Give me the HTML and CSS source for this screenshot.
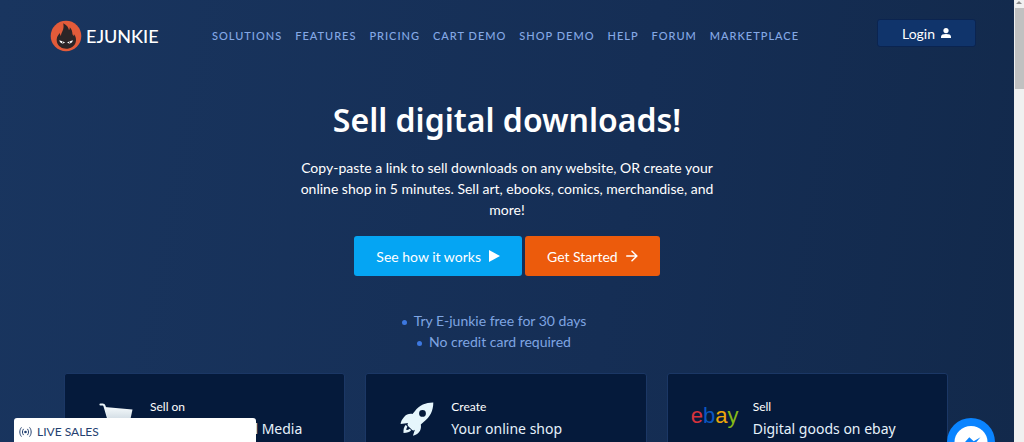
FILE: index.html
```html
<!DOCTYPE html>
<html lang="en">
<head>
  <meta charset="UTF-8" />
  <meta name="viewport" content="width=device-width, initial-scale=1.0" />
  <title>E-junkie - Sell digital downloads</title>
  <link rel="stylesheet" href="styles.css">
</head>
<body>
  <div class="page">
    <header class="topbar">
      <a href="#" class="logo">
        <svg width="32" height="32" viewBox="0 0 32 32" aria-hidden="true">
          <circle cx="16" cy="16" r="15.3" fill="#e25b3a" />
          <path fill="#2b2527" d="M13.2 3.200c3.600 1.600 5.300 4.400 5.800 7 .7-1 .9-2 .8-3 2.200 2.500 2.400 4.300 2.600 6.300 0 1.300.8 2 1.300 2.600.3-.8.3-1.500.1-2.200 2.200 2.600 2.700 5.600 1.900 8.300-1.100 3.900-5 6.500-9.500 6.500S7.900 26 6.900 22c-.9-3.400.6-6.500 3-8.900.1 1.300.4 2.200 1 2.900.2-2.700 1.600-4.300 2.200-6.400.6-2.200.6-4.300.1-6.400z" />
          <path fill="#fff" d="M9.300 20.200l5.600 2.100c-.7 1.800-4.800 1.700-5.600-2.100zM22.900 20.200l-5.600 2.100c.7 1.800 4.800 1.700 5.600-2.100z" />
          <circle cx="12.600" cy="22.200" r=".6" fill="#2b2527" />
          <circle cx="19.600" cy="22.200" r=".6" fill="#2b2527" />
        </svg>
        <span>EJUNKIE</span>
      </a>
      <nav class="menu">
        <a href="#">SOLUTIONS</a>
        <a href="#">FEATURES</a>
        <a href="#">PRICING</a>
        <a href="#">CART DEMO</a>
        <a href="#">SHOP DEMO</a>
        <a href="#">HELP</a>
        <a href="#">FORUM</a>
        <a href="#">MARKETPLACE</a>
      </nav>
      <a href="#" class="login">
        Login
        <svg width="10" height="10" viewBox="0 0 10 10" aria-hidden="true">
          <circle cx="5" cy="2.600" r="2.600" fill="#fff" />
          <path d="M0 10V8.600C0 6.900 2.200 6.100 5 6.100s5 .8 5 2.500V10z" fill="#fff" />
        </svg>
      </a>
    </header>

    <main>
      <section class="hero">
        <h1>Sell digital downloads!</h1>
        <p>Copy-paste a link to sell downloads on any website, OR create your online shop in 5 minutes. Sell art, ebooks, comics, merchandise, and more!</p>
        <div class="buttons">
          <button type="button" class="btn btn-blue">
            See how it works
            <svg width="11" height="12" viewBox="0 0 11 12" aria-hidden="true"><path d="M0 0l11 6-11 6z" fill="#fff" /></svg>
          </button>
          <button type="button" class="btn btn-orange">
            Get Started
            <svg width="12" height="12" viewBox="0 0 12 12" aria-hidden="true"><path d="M.7 6h10M6 1.200L10.900 6 6 10.800" fill="none" stroke="#fff" stroke-width="1.500" stroke-linecap="round" stroke-linejoin="round" /></svg>
          </button>
        </div>
        <ul class="perks">
          <li>Try E-junkie free for 30 days</li>
          <li>No credit card required</li>
        </ul>
      </section>

      <section class="cards">
        <a href="#" class="card">
          <div class="card-icon">
            <svg width="34" height="34" viewBox="0 0 34 34" aria-hidden="true">
              <defs>
                <linearGradient id="cart" x1="0" y1="0" x2="0" y2="1">
                  <stop offset="0" stop-color="#f4f9fb" />
                  <stop offset="1" stop-color="#c3d0da" />
                </linearGradient>
              </defs>
              <path d="M1.500 2.500h2.200c1 0 1.500.6 1.800 1.500l6.500 22h18" fill="none" stroke="#eaf4f8" stroke-width="2.200" stroke-linecap="round" />
              <path d="M5.500 5l28 2.500-3 14-20 1z" fill="url(#cart)" />
              <circle cx="14" cy="30" r="2.500" fill="#eaf4f8" />
              <circle cx="27" cy="30" r="2.500" fill="#eaf4f8" />
            </svg>
          </div>
          <div class="card-text">
            <small>Sell on</small>
            <h2>Website &amp; Social Media</h2>
          </div>
        </a>
        <a href="#" class="card">
          <div class="card-icon">
            <svg width="34" height="34" viewBox="0 0 34 34" aria-hidden="true">
              <path fill="#e6f6fc" fill-rule="evenodd" d="M33.300.6C26 .5 19.500 3.200 14.800 9.200L12.500 12c-3.300-.5-6.200.4-8.600 3.200C1.900 17.400.9 19.600.6 22l7.600-.9c-1 1.100-.9 2 .1 3.100l3.600 3.500c1 .9 2 .9 3 .1l-2 5.900c3.200-.7 5.700-2.400 7.100-5 1-2 1.200-4.200.8-6.300l2.800-2.400C30.200 15.400 33.300 8.500 33.300.6zM22.500 8a3.400 3.400 0 1 1 0 6.800 3.400 3.400 0 0 1 0-6.800z" />
              <path fill="#e6f6fc" d="M5.800 22.800c-1.900 2-2.500 4.700-2.300 8.200 3.600 0 6.200-.7 7.800-2.900l-2-1.400c-.7 1-1.700 1.400-3 1.400.1-1.500.4-2.500 1.100-3.400z" />
            </svg>
          </div>
          <div class="card-text">
            <small>Create</small>
            <h2>Your online shop</h2>
          </div>
        </a>
        <a href="#" class="card">
          <div class="card-icon ebay">
            <span class="red">e</span><span class="blue">b</span><span class="yellow">a</span><span class="green">y</span>
          </div>
          <div class="card-text">
            <small>Sell</small>
            <h2>Digital goods on ebay</h2>
          </div>
        </a>
      </section>
    </main>
  </div>

  <!-- Live sales bar -->
  <div class="live-sales">
    <svg width="13" height="10" viewBox="0 0 13 10" aria-hidden="true">
      <circle cx="6.500" cy="5" r="1.300" fill="#24406f" />
      <path d="M2.200.7C.3 3 .3 7 2.200 9.300M4.300 2.200c-1.200 1.600-1.200 4 0 5.600M8.700 2.200c1.200 1.600 1.200 4 0 5.600M10.800.7c1.900 2.300 1.900 6.300 0 8.600" fill="none" stroke="#24406f" stroke-linecap="round" />
    </svg>
    LIVE SALES
  </div>

  <!-- Messenger chat -->
  <button type="button" class="messenger" aria-label="Open Messenger">
    <svg width="48" height="48" viewBox="0 0 48 48" aria-hidden="true">
      <circle cx="24" cy="24" r="24" fill="#0a84ff" />
      <ellipse cx="24" cy="24" rx="16.500" ry="16" fill="#fff" />
      <path d="M14 28.500l8.300-9.200 4.400 4 6.800-4-8.300 9.400-4.300-4.300z" fill="#0a84ff" />
    </svg>
  </button>

  <div class="scrollbar">
    <svg width="10" height="8" viewBox="0 0 10 8" aria-hidden="true"><path d="M2 4l3-3 3 3z" fill="#8a8a8a" /></svg>
    <div class="thumb"></div>
  </div>
</body>
</html>
```

FILE: styles.css
```css
* {
  margin: 0;
  padding: 0;
  box-sizing: border-box;
}

body, html {
  height: 100%;
  overflow: hidden;
  font-family: Lato, "Liberation Sans", sans-serif;
}

body {
  background: linear-gradient(100deg, #19355f 0%, #152e55 60%, #12294b 100%);
  color: white;
}

a {
  color: inherit;
  text-decoration: none;
}

.page {
  padding-right: 10px;
}

.topbar {
  display: flex;
  align-items: center;
  height: 72px;
  padding: 0 38px 0 50px;
}

.logo {
  display: flex;
  align-items: center;
  gap: 4px;
  width: 162px;
  font-size: 18px;
  font-weight: 500;
}

.menu {
  display: flex;
  gap: 13px;
  padding-bottom: 2px;
  font-size: 11px;
  font-weight: 500;
  letter-spacing: 1px;
  color: #85a9e6;
}

.login {
  display: flex;
  align-items: center;
  justify-content: center;
  gap: 6px;
  width: 99px;
  height: 28px;
  margin: 0 0 6px auto;
  background: #10346b;
  border: 1px solid #0b2450;
  border-radius: 3px;
  font-size: 14px;
}

.hero {
  display: flex;
  flex-direction: column;
  align-items: center;
  padding-top: 24px;
  text-align: center;
}

.hero h1 {
  font-family: "Noto Sans", sans-serif;
  font-size: 32px;
  font-weight: 600;
  line-height: 48px;
}

.hero p {
  width: 424px;
  margin-top: 13px;
  font-size: 14px;
  line-height: 21px;
}

.buttons {
  display: flex;
  gap: 3px;
  margin-top: 16px;
}

.btn {
  display: flex;
  align-items: center;
  gap: 8px;
  height: 40px;
  padding: 0 22px;
  border: none;
  border-radius: 3px;
  color: white;
  font-family: inherit;
  font-size: 14px;
  cursor: pointer;
}

.btn-blue {
  background: #05a5f3;
}

.btn-orange {
  background: #ec5b0c;
}

.perks {
  margin-top: 34px;
  padding-right: 26px;
  list-style: none;
  font-size: 14px;
  line-height: 21px;
  color: #7fa5e2;
}

.perks li::before {
  content: "";
  display: inline-block;
  width: 5px;
  height: 5px;
  margin-right: 7px;
  border-radius: 50%;
  background: #3d78e0;
  vertical-align: middle;
}

.cards {
  display: grid;
  grid-template-columns: repeat(3, 1fr);
  gap: 20px;
  padding: 0 66px 0 64px;
  margin-top: 21px;
}

.card {
  display: flex;
  padding: 24px 0 36px 20px;
  background: #051a3b;
  border: 1px solid #1b3765;
  border-radius: 3px;
}

.card-icon {
  display: flex;
  justify-content: center;
  align-items: center;
  width: 65px;
  height: 42px;
  padding-right: 4px;
}

.ebay {
  justify-content: flex-start;
  padding: 0 0 6px 3px;
  font-family: "Liberation Sans", sans-serif;
  font-size: 22px;
}

.red {
  color: #d5323c;
}

.blue {
  color: #0b57c2;
}

.yellow {
  color: #eba60a;
}

.green {
  color: #86b817;
}

.card-text small {
  display: block;
  font-size: 12px;
  line-height: 18px;
}

.card-text h2 {
  font-family: "Noto Sans", sans-serif;
  font-size: 14px;
  font-weight: normal;
  line-height: 26px;
  color: #e6f2fb;
}

.live-sales {
  position: fixed;
  left: 14px;
  bottom: 0;
  display: flex;
  align-items: center;
  gap: 5px;
  width: 242px;
  height: 24px;
  padding: 3px 5px 0;
  background: white;
  border-radius: 3px 3px 0 0;
  color: #24406f;
  font-size: 12px;
}

.messenger {
  position: fixed;
  right: 29px;
  bottom: -24px;
  width: 48px;
  height: 48px;
  background: none;
  border: none;
  border-radius: 50%;
  cursor: pointer;
}

.scrollbar {
  position: fixed;
  top: 0;
  right: 0;
  bottom: 0;
  width: 10px;
  display: flex;
  flex-direction: column;
  background: #f0f0f0;
}

.thumb {
  height: 81px;
  margin-left: 1px;
  background: #c1c1c1;
}
```
